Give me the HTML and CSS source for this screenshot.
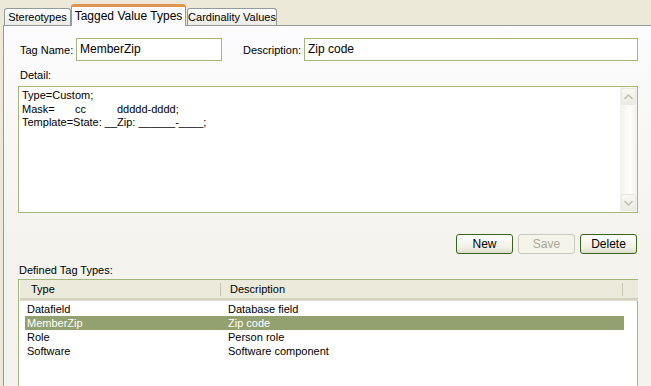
FILE: index.html
```html
<!DOCTYPE html>
<html>
<head>
  <title>Tagged Value Types</title>
  <link rel="stylesheet" href="styles.css">
</head>
<body>
  <div class="tabs">
    <div class="tab tab-stereo">Stereotypes</div>
    <div class="tab tab-active">Tagged Value Types</div>
    <div class="tab tab-card">Cardinality Values</div>
  </div>
  <div class="panel">
    <div class="row-top">
      <span class="lbl">Tag Name:</span>
      <div class="box box-name">MemberZip</div>
      <span class="lbl lbl-desc">Description:</span>
      <div class="box box-desc">Zip code</div>
    </div>

    <div class="caption">Detail:</div>
    <div class="detail">
      <div class="detail-text">
        <div>Type=Custom;</div>
        <div><span class="c1">Mask=</span><span class="c2">cc</span>ddddd-dddd;</div>
        <div>Template=State: __Zip: ______-____;</div>
      </div>
      <div class="vscroll">
        <div class="sbtn">
          <svg width="9" height="6" viewBox="0 0 9 6"><path d="M0.5 5 L4.5 1 L8.5 5" fill="none" stroke="#c4c2b4" stroke-width="1.6"/></svg>
        </div>
        <div class="sbtn">
          <svg width="9" height="6" viewBox="0 0 9 6"><path d="M0.5 1 L4.5 5 L8.5 1" fill="none" stroke="#c4c2b4" stroke-width="1.6"/></svg>
        </div>
      </div>
    </div>

    <div class="buttons">
      <div class="btn">New</div>
      <div class="btn btn-off">Save</div>
      <div class="btn">Delete</div>
    </div>

    <div class="caption caption-list">Defined Tag Types:</div>
    <div class="list">
      <div class="list-head">
        <div class="col-type">Type</div>
        <div class="col-desc">Description</div>
        <div class="col-rest"></div>
      </div>
      <div class="item"><span class="i-type">Datafield</span><span>Database field</span></div>
      <div class="item sel"><span class="i-type">MemberZip</span><span>Zip code</span></div>
      <div class="item"><span class="i-type">Role</span><span>Person role</span></div>
      <div class="item"><span class="i-type">Software</span><span>Software component</span></div>
    </div>
  </div>
</body>
</html>
```

FILE: styles.css
```css
body{
  margin: 0;
  background: #ece9d8;
  font-family: "Liberation Sans", Arial, sans-serif;
  font-size: 11px;
  color: #000;
  overflow: hidden;
}

/* tab strip */
.tabs{
  display: flex;
  align-items: flex-end;
  height: 25px;
  padding-left: 4px;
}
.tab{
  height: 16px;
  line-height: 16px;
  text-align: center;
  border: 1px solid #919b9c;
  border-bottom: none;
  border-radius: 3px 3px 0 0;
  background: linear-gradient(#ffffff, #ecebe6);
}
.tab-stereo{ width: 65px; }
.tab-card{ width: 88px; margin-left: 1px; }
.tab-active{
  width: 113px;
  height: 19px;
  line-height: 19px;
  border-color: #919b9c;
  border-top: 3px solid #e09550;
  background: #fcfcfe;
  position: relative;
  z-index: 1;
  margin-bottom: -1px;
  font-size: 12px;
}

.panel{
  margin-left: 3px;
  border-left: 1px solid #919b9c;
  border-top: 1px solid #919b9c;
  background: linear-gradient(#fcfcfe, #f4f3ee 60%);
  height: 360px;
  padding: 0 13px 0 14px;
}

.row-top{
  display: flex;
  align-items: center;
  padding-top: 12px;
}
.lbl{
  padding-left: 2px;
  width: 56px;
}
.lbl-desc{
  width: 61px;
  margin-left: 21px;
  padding-left: 0;
}
.box{
  height: 23px;
  line-height: 21px;
  border: 1px solid #a2b77c;
  background: #fff;
  padding-left: 3px;
  box-sizing: border-box;
  font-size: 12px;
}
.box-name{ width: 146px; }
.box-desc{ flex: 1; }

.caption{
  margin-top: 8px;
  height: 13px;
  line-height: 13px;
  padding-left: 2px;
}
.detail{
  margin-top: 4px;
  height: 127px;
  box-sizing: border-box;
  border: 1px solid #a2b77c;
  background: #fff;
  display: flex;
}
.detail-text{
  flex: 1;
  padding: 2px 0 0 3px;
  line-height: 13.5px;
}
.c1{ display: inline-block; width: 53px; }
.c2{ display: inline-block; width: 42px; }

.vscroll{
  width: 17px;
  display: flex;
  flex-direction: column;
  justify-content: space-between;
  background: linear-gradient(to right, #f3f1e8, #fefefb 60%, #f2f1ea);
  padding: 1px 0;
}
.sbtn{
  height: 15px;
  margin: 0 1px;
  border: 1px solid #e9e8e0;
  border-radius: 2px;
  background: linear-gradient(#f9f8f3, #ecebe3);
  display: flex;
  align-items: center;
  justify-content: center;
}

.buttons{
  display: flex;
  justify-content: flex-end;
  gap: 5px;
  margin-top: 21px;
  padding-right: 1px;
}
.btn{
  width: 57px;
  height: 20px;
  box-sizing: border-box;
  border: 1px solid #3a6320;
  border-radius: 3px;
  background: linear-gradient(#ffffff, #f0f0e6 70%, #dcdccc);
  text-align: center;
  line-height: 18px;
  font-size: 12px;
}
.btn-off{
  border-color: #cac8bb;
  background: #f5f4ea;
  color: #aca899;
}

.caption-list{
  margin-top: 10px;
  padding-left: 1px;
}
.list{
  margin-top: 2px;
  border: 1px solid #a2b77c;
  background: #fff;
  height: 120px;
  padding: 0 0 0 1px;
}
.list-head{
  display: flex;
  height: 20px;
  background: #ebeadb;
  border-bottom: 2px solid #d3d0bd;
  box-shadow: 0 1px 0 #e2dfcf;
  width: 618px;
  box-sizing: border-box;
  padding-top: 3px;
}
.col-type,
.col-desc{
  box-sizing: border-box;
  border-right: 1px solid #c7c5b2;
  height: 13px;
  line-height: 13px;
}
.col-type{
  width: 201px;
  padding-left: 11px;
}
.col-desc{
  width: 402px;
  padding-left: 9px;
}
.item{
  display: flex;
  height: 14px;
  line-height: 14px;
  width: 599px;
  margin-left: 5px;
  padding-left: 2px;
  box-sizing: border-box;
}
.list-head + .item{ margin-top: 2px; }
.i-type{ width: 201px; }
.sel{
  background: #93a06f;
  color: #fff;
}
```
